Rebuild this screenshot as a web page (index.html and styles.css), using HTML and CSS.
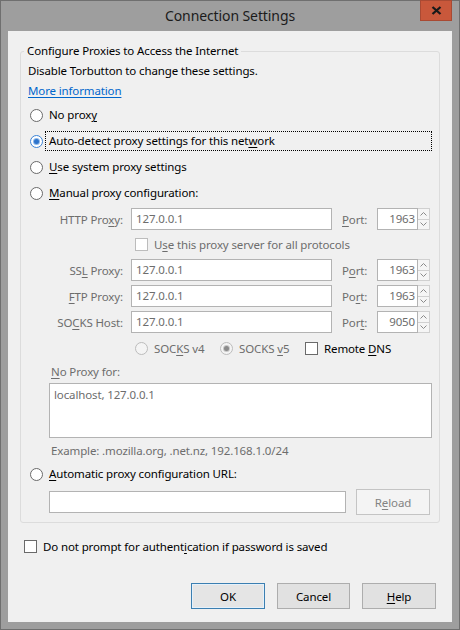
FILE: index.html
```html
<!DOCTYPE html>
<html>
<head>
<meta charset="utf-8">
<link rel="stylesheet" href="styles.css">
</head>
<body>
<div class="window">
  <header class="titlebar">
    <span class="tb-side"></span>
    <h1 class="title">Connection Settings</h1>
    <div class="tb-side tb-right">
      <div class="close"><svg width="11" height="9" viewBox="0 0 11 9"><path d="M1.5 1 L9.5 8 M9.5 1 L1.5 8" stroke="#1a1a1a" stroke-width="2.3"/></svg></div>
    </div>
  </header>
  <main class="client">
    <fieldset class="group">
      <legend class="group-title">Configure Proxies to Access the Internet</legend>
      <div class="line">Disable Torbutton to change these settings.</div>
      <div class="line line-link"><a class="link" href="#">More information</a></div>
      <div class="opt"><span class="radio"></span><span class="opt-label">No prox<u>y</u></span></div>
      <div class="opt"><span class="radio on"></span><span class="opt-label focus">Auto-detect proxy settings for this net<u>w</u>ork</span></div>
      <div class="opt"><span class="radio"></span><span class="opt-label"><u>U</u>se system proxy settings</span></div>
      <div class="opt"><span class="radio"></span><span class="opt-label"><u>M</u>anual proxy configuration:</span></div>
      <div class="manual">
        <div class="prow">
          <span class="plabel">HTTP Pro<u>x</u>y:</span>
          <span class="field host">127.0.0.1</span>
          <span class="portlabel"><u>P</u>ort:</span>
          <span class="spin"><span class="spin-val">1963</span><span class="spin-btns"><span class="sb"><svg width="7" height="4" viewBox="0 0 7 4"><path d="M0.5 3.5 L3.5 0.5 L6.5 3.5" fill="none" stroke="#8a8a8a"/></svg></span><span class="sb"><svg width="7" height="4" viewBox="0 0 7 4"><path d="M0.5 0.5 L3.5 3.5 L6.5 0.5" fill="none" stroke="#8a8a8a"/></svg></span></span></span>
        </div>
        <div class="crow"><span class="check dis"></span><span class="dim">U<u>s</u>e this proxy server for all protocols</span></div>
        <div class="prow">
          <span class="plabel">SS<u>L</u> Proxy:</span>
          <span class="field host">127.0.0.1</span>
          <span class="portlabel">P<u>o</u>rt:</span>
          <span class="spin"><span class="spin-val">1963</span><span class="spin-btns"><span class="sb"><svg width="7" height="4" viewBox="0 0 7 4"><path d="M0.5 3.5 L3.5 0.5 L6.5 3.5" fill="none" stroke="#8a8a8a"/></svg></span><span class="sb"><svg width="7" height="4" viewBox="0 0 7 4"><path d="M0.5 0.5 L3.5 3.5 L6.5 0.5" fill="none" stroke="#8a8a8a"/></svg></span></span></span>
        </div>
        <div class="prow">
          <span class="plabel"><u>F</u>TP Proxy:</span>
          <span class="field host">127.0.0.1</span>
          <span class="portlabel">Po<u>r</u>t:</span>
          <span class="spin"><span class="spin-val">1963</span><span class="spin-btns"><span class="sb"><svg width="7" height="4" viewBox="0 0 7 4"><path d="M0.5 3.5 L3.5 0.5 L6.5 3.5" fill="none" stroke="#8a8a8a"/></svg></span><span class="sb"><svg width="7" height="4" viewBox="0 0 7 4"><path d="M0.5 0.5 L3.5 3.5 L6.5 0.5" fill="none" stroke="#8a8a8a"/></svg></span></span></span>
        </div>
        <div class="prow">
          <span class="plabel">SO<u>C</u>KS Host:</span>
          <span class="field host">127.0.0.1</span>
          <span class="portlabel">Por<u>t</u>:</span>
          <span class="spin"><span class="spin-val">9050</span><span class="spin-btns"><span class="sb"><svg width="7" height="4" viewBox="0 0 7 4"><path d="M0.5 3.5 L3.5 0.5 L6.5 3.5" fill="none" stroke="#8a8a8a"/></svg></span><span class="sb"><svg width="7" height="4" viewBox="0 0 7 4"><path d="M0.5 0.5 L3.5 3.5 L6.5 0.5" fill="none" stroke="#8a8a8a"/></svg></span></span></span>
        </div>
        <div class="srow">
          <span class="sgroup"><span class="radio dis"></span><span class="dim">SOC<u>K</u>S v4</span></span>
          <span class="sgroup"><span class="radio dis on"></span><span class="dim">SOCKS <u>v</u>5</span></span>
          <span class="sgroup sgroup-last"><span class="check"></span><span>Remote <u>D</u>NS</span></span>
        </div>
        <div class="np-label dim"><u>N</u>o Proxy for:</div>
        <div class="textarea">localhost, 127.0.0.1</div>
        <div class="example dim">Example: .mozilla.org, .net.nz, 192.168.1.0/24</div>
      </div>
      <div class="opt opt-short"><span class="radio"></span><span class="opt-label"><u>A</u>utomatic proxy configuration URL:</span></div>
      <div class="urlrow"><span class="field url"></span><span class="btn dis">R<u>e</u>load</span></div>
    </fieldset>
    <div class="auth"><span class="check"></span><span>Do not prompt for authent<u>i</u>cation if password is saved</span></div>
    <div class="buttons">
      <span class="btn default">OK</span>
      <span class="btn cancel">Cancel</span>
      <span class="btn"><u>H</u>elp</span>
    </div>
  </main>
</div>
</body>
</html>
```
FILE: styles.css
```css
* { box-sizing: border-box; }
html, body { margin: 0; padding: 0; }
body {
  width: 460px;
  height: 630px;
  overflow: hidden;
  font-family: "Noto Sans", "Open Sans", sans-serif;
  font-size: 11.5px;
  letter-spacing: -0.13px;
  color: #000;
  white-space: nowrap;
}
u { text-decoration-thickness: 1px; text-underline-offset: 2px; }

.window {
  width: 460px;
  height: 630px;
  background: #9e9e9e;
  border: 1px solid #6f6f6f;
  display: flex;
  flex-direction: column;
}

.titlebar {
  height: 30px;
  display: grid;
  grid-template-columns: 1fr auto 1fr;
  align-items: start;
}
.title {
  margin: 0;
  font-weight: normal;
  font-size: 14px;
  letter-spacing: -0.1px;
  line-height: 30px;
  color: #1b1b1b;
}
.tb-right { display: flex; justify-content: flex-end; padding-right: 7px; }
.close {
  margin-top: -1px;
  width: 32px;
  height: 21px;
  background: #c9583b;
  border: 1px solid #a94a33;
  display: flex;
  align-items: center;
  justify-content: center;
}

.client {
  flex: 1;
  margin: 0 7px 7px;
  background: #f0f0f0;
  padding: 12px 14px 13px 12px;
  display: flex;
  flex-direction: column;
}

.group {
  margin: 0;
  border: 1px solid #dcdcdc;
  border-radius: 3px;
  padding: 2px 7px 7px 7px;
  display: flex;
  flex-direction: column;
}
.group-title {
  margin-left: -4px;
  padding: 0 3px 0 3px;
  line-height: 16px;
}

.line { height: 20px; line-height: 20px; }
.line-link { height: 21px; }
.link { color: #0066cc; text-decoration: underline; text-underline-offset: 2px; }

.opt { height: 26px; display: flex; align-items: center; padding-left: 2px; }
.opt-short { height: 20px; }
.opt-label {
  margin-left: 2px;
  padding: 0 3px;
  border: 1px dotted transparent;
  line-height: 18px;
}
.opt-label.focus { flex: 1; border-color: #000; }

.radio {
  width: 13px;
  height: 13px;
  border-radius: 50%;
  border: 1px solid #6a6a6a;
  background: #fff;
  flex: none;
  display: flex;
  align-items: center;
  justify-content: center;
}
.radio.on { border-color: #3b83d6; }
.radio.on::after {
  content: "";
  width: 5px;
  height: 5px;
  border-radius: 50%;
  background: #2d74cc;
  box-shadow: 0 0 0 1px #8fb8e8;
}
.radio.dis { border-color: #bcbcbc; background: #f4f4f4; }
.radio.dis.on::after { background: #8a8a8a; box-shadow: 0 0 0 1px #c8c8c8; }

.check {
  width: 13px;
  height: 13px;
  border: 1px solid #6a6a6a;
  background: #fff;
  flex: none;
}
.check.dis { border-color: #bcbcbc; background: #fff; }

.dim { color: #6d6d6d; }

.manual { margin-left: 21px; display: flex; flex-direction: column; }

.prow { height: 26px; display: flex; align-items: center; }
.plabel { width: 74px; text-align: right; color: #6d6d6d; margin-right: 8px; flex: none; }
.field {
  height: 22px;
  border: 1px solid #b3b3b3;
  background: #fff;
  color: #6d6d6d;
  padding: 0 4px;
  line-height: 20px;
  flex: none;
}
.host { width: 201px; }
.portlabel { margin-left: 10px; width: 35px; color: #6d6d6d; flex: none; }
.spin { display: flex; height: 22px; width: 53px; flex: none; }
.spin-val {
  flex: 1;
  border: 1px solid #b3b3b3;
  background: #fff;
  color: #6d6d6d;
  text-align: right;
  padding-right: 2px;
  line-height: 20px;
}
.spin-btns { width: 12px; display: flex; flex-direction: column; }
.sb {
  flex: 1;
  border: 1px solid #d0d0d0;
  border-left: none;
  background: #f5f5f5;
  display: flex;
  align-items: center;
  justify-content: center;
}
.sb + .sb { border-top: none; }

.crow { height: 25px; display: flex; align-items: center; padding-left: 86px; gap: 6px; }

.srow { height: 26px; display: flex; align-items: center; padding-left: 86px; }
.sgroup { width: 85px; display: flex; align-items: center; gap: 6px; flex: none; }
.sgroup-last { width: auto; }

.np-label { height: 20px; line-height: 20px; padding-left: 2px; margin-top: 1px; }
.textarea {
  margin-top: 1px;
  width: 383px;
  height: 55px;
  border: 1px solid #b3b3b3;
  background: #fff;
  color: #6d6d6d;
  padding: 3px 4px;
  line-height: 16px;
}
.example { height: 26px; line-height: 26px; padding-left: 2px; }

.urlrow { height: 26px; margin-top: 5px; display: flex; align-items: center; margin-left: 21px; }
.url { width: 297px; }

.btn {
  height: 26px;
  display: flex;
  align-items: center;
  justify-content: center;
  border: 1px solid #adadad;
  background: #e1e1e1;
  flex: none;
  width: 74px;
}
.urlrow .btn { margin-left: 10px; }
.btn.dis {
  border-color: #c4c4c4;
  background: #f4f4f4;
  color: #838383;
}

.auth { margin-top: 13px; height: 20px; display: flex; align-items: center; padding-left: 4px; gap: 6px; }

.buttons { margin-top: auto; display: flex; justify-content: flex-end; gap: 12px; padding-right: 2px; }
.btn.default { border-color: #3c7fb1; background: #e5e5e5; box-shadow: inset 0 0 0 1px #e5f1fb; }
.btn.cancel { width: 73px; }
```
